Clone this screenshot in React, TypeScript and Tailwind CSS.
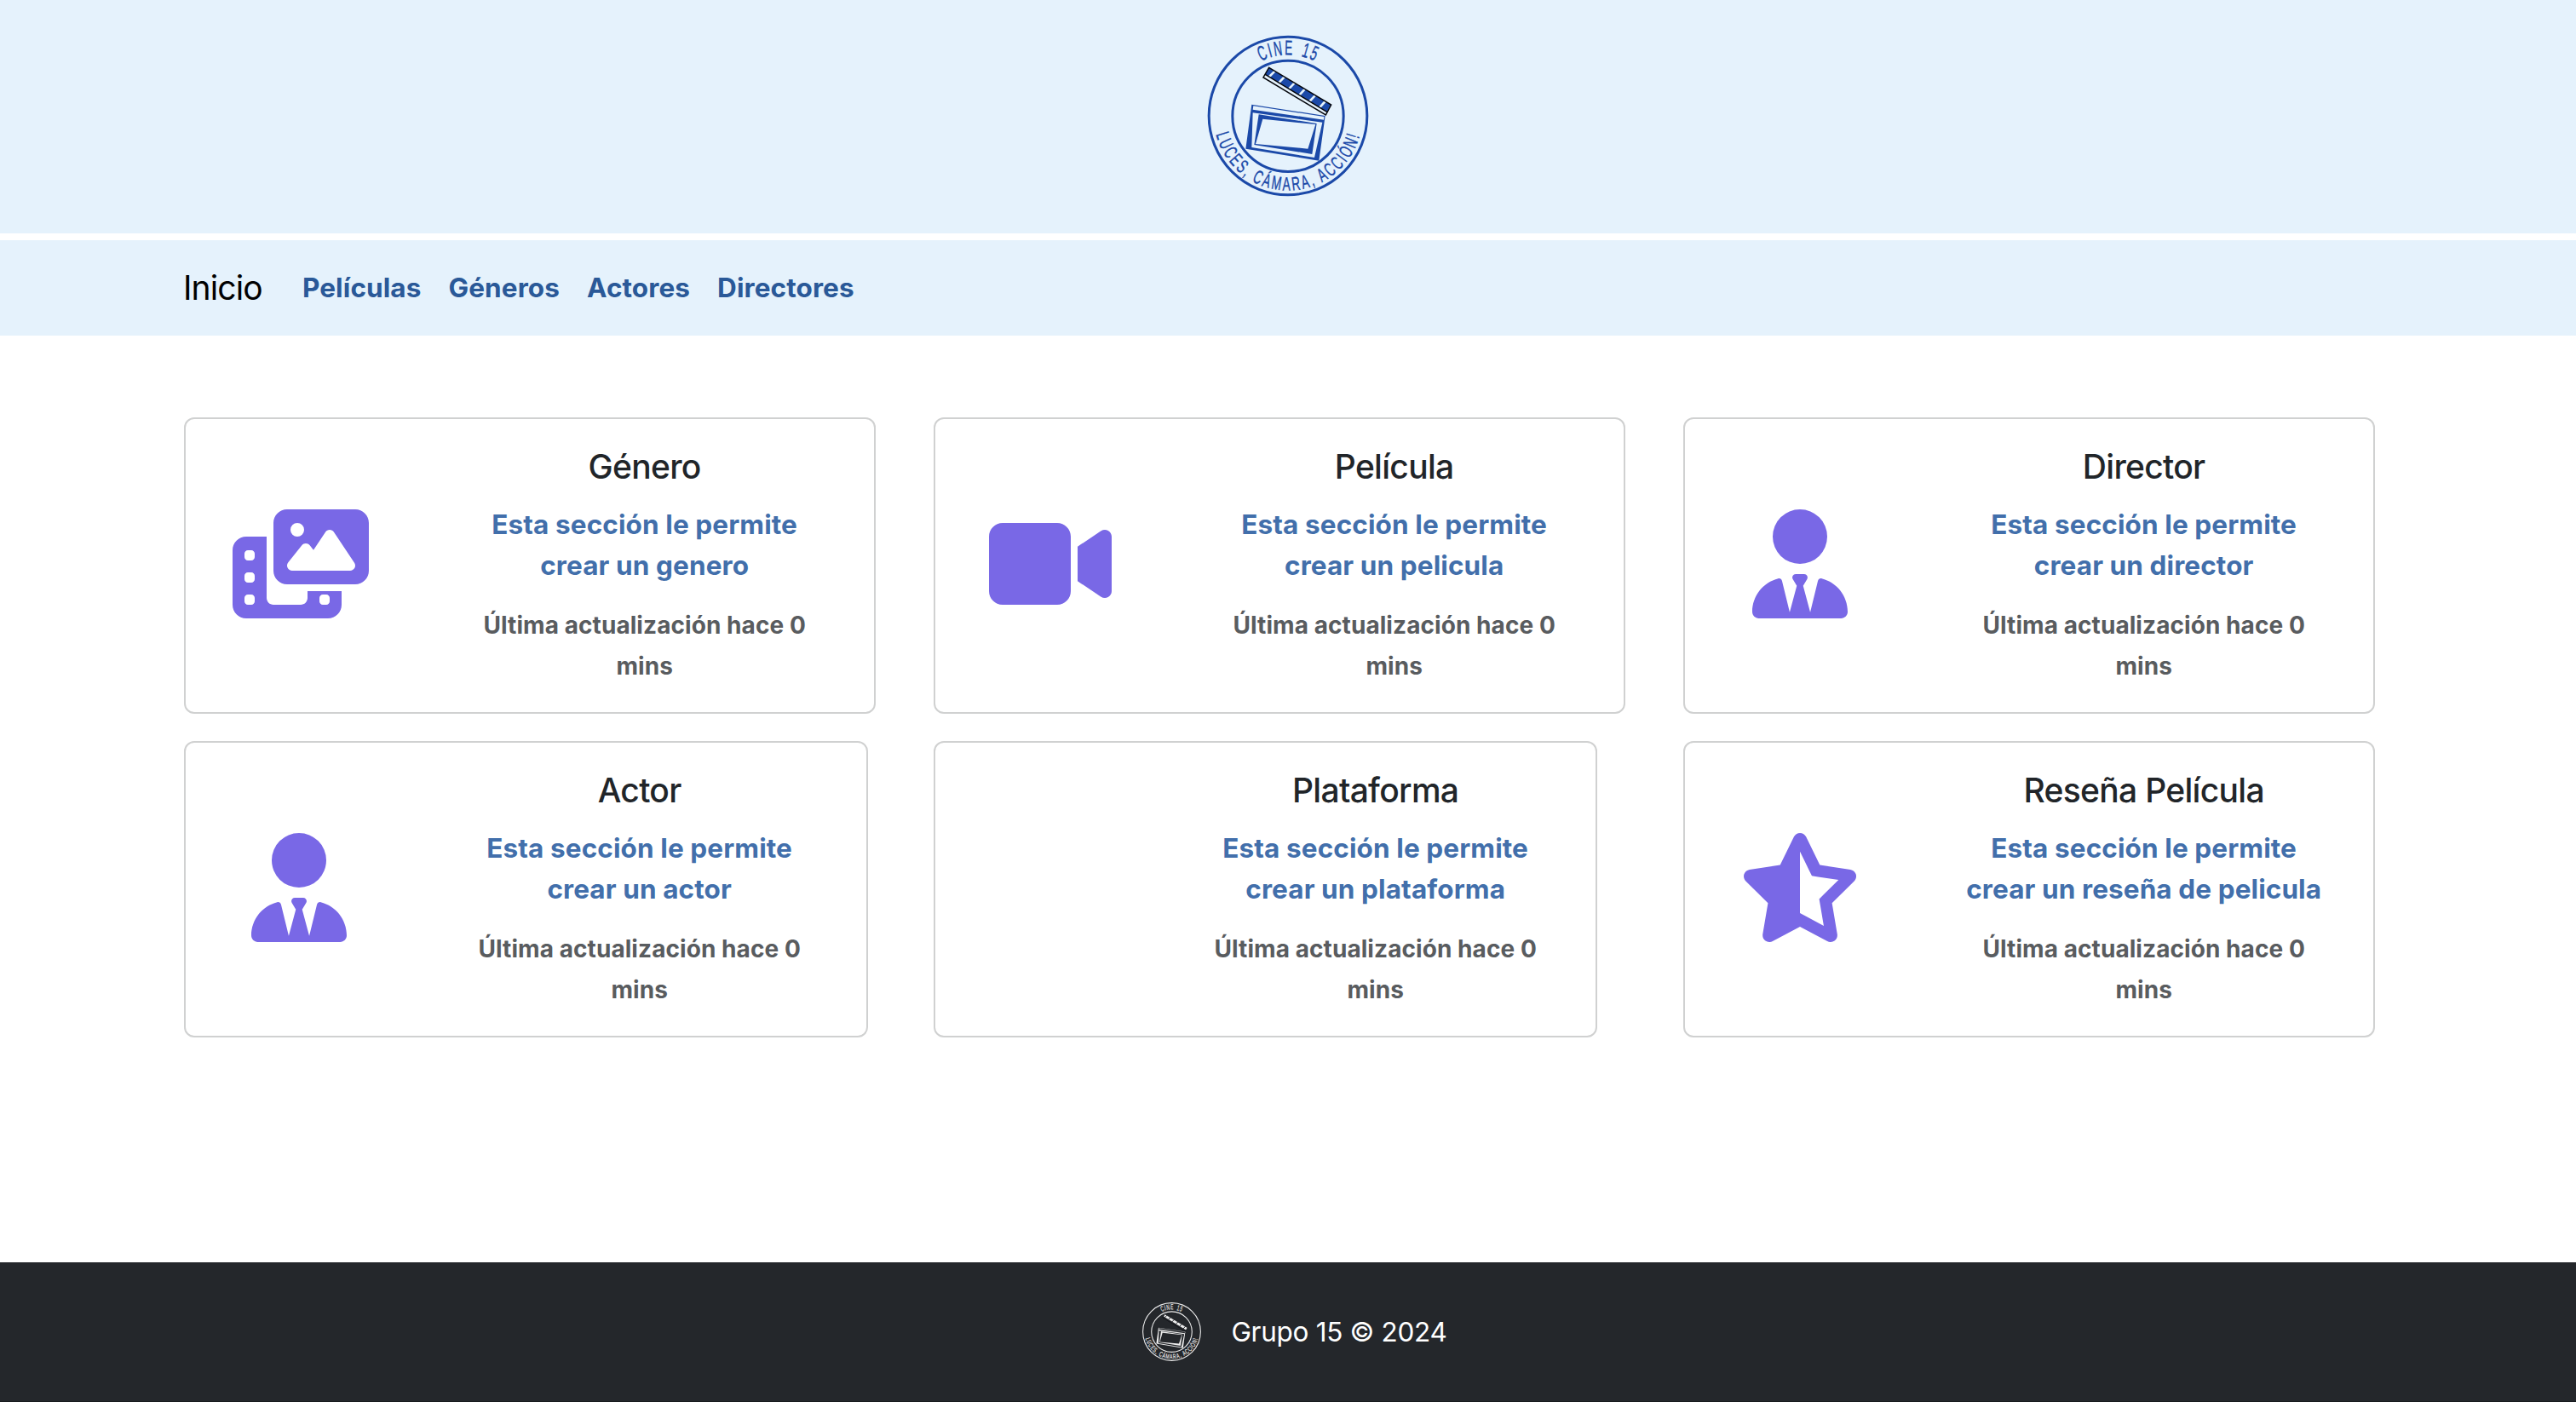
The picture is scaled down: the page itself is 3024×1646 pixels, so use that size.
import type { ComponentType } from "react";
import { FaPhotoFilm, FaStarHalfStroke, FaUserTie, FaVideo } from "react-icons/fa6";

type LogoProps = { id: string; color: string; background: string; className: string };

// Round badge with a clapperboard in the middle and lettering around the ring.
function Logo({ id, color, background, className }: LogoProps) {
  const stripes = [
    [290, 189, 270, 209],
    [324, 209, 303, 231],
    [359, 231, 339, 252],
    [396, 252, 376, 274],
    [433, 274, 412, 296],
    [467, 296, 447, 318],
  ];
  return (
    <svg viewBox="36 47 600 600" className={className} role="img" aria-label="Cine 15">
      <defs>
        <path id={`${id}-top`} d="M 240 155 A 215 215 0 0 1 436 157" />
        <path id={`${id}-bottom`} d="M 82 412 A 262 262 0 0 0 590 412" />
      </defs>
      <circle cx="336" cy="347" r="278.5" fill="none" stroke={color} strokeWidth="9" />
      <circle cx="336" cy="348" r="195.5" fill="none" stroke={color} strokeWidth="9" />
      <g fill={color} stroke={color} strokeWidth="1.2" fontFamily="'Liberation Sans', Arial, sans-serif">
        <text fontSize="72" letterSpacing="10" wordSpacing="14">
          <textPath href={`#${id}-top`} textLength="202" lengthAdjust="spacingAndGlyphs">CINE 15</textPath>
        </text>
        <text fontSize="67" letterSpacing="12">
          <textPath href={`#${id}-bottom`} textLength="694" lengthAdjust="spacingAndGlyphs">LUCES, CÁMARA, ACCIÓN!</textPath>
        </text>
      </g>
      <path d="M269 177 L488 308 L473 333 L256 201 Z" fill={color} />
      {stripes.map(([x1, y1, x2, y2]) => (
        <line key={x1} x1={x1} y1={y1} x2={x2} y2={y2} stroke={background} strokeWidth="8" />
      ))}
      <path d="M269 177 L488 308 L469 344 L249 212 Z M256 201 L473 333" fill="none" stroke="#05070c" strokeWidth="4.5" />
      <path
        fillRule="evenodd"
        fill={color}
        d="M208 307 L467 347 L445 505 L187 463 Z M214 312 L212 325 L462 361 L463 350 Z M212 336 L208 458 L429 494 L457 370 Z"
      />
      <path
        fillRule="evenodd"
        fill={color}
        d="M233 342 L437 374 L421 482 L217 449 Z M247 358 L222 446 L406 463 L433 377 Z"
      />
    </svg>
  );
}

type Section = {
  title: string;
  subject: string;
  Icon?: ComponentType<{ className?: string }>;
  iconWidth?: string;
  width: string;
};

const sections: Section[] = [
  { title: "Género", subject: "genero", Icon: FaPhotoFilm, iconWidth: "w-40", width: "w-[812px]" },
  { title: "Película", subject: "pelicula", Icon: FaVideo, iconWidth: "w-36", width: "w-[812px]" },
  { title: "Director", subject: "director", Icon: FaUserTie, iconWidth: "w-28", width: "w-[812px]" },
  { title: "Actor", subject: "actor", Icon: FaUserTie, iconWidth: "w-28", width: "w-[803px]" },
  { title: "Plataforma", subject: "plataforma", width: "w-[779px]" },
  { title: "Reseña Película", subject: "reseña de pelicula", Icon: FaStarHalfStroke, iconWidth: "w-36", width: "w-[812px]" },
];

function Card({ title, subject, Icon, iconWidth, width }: Section) {
  return (
    <article className={`${width} grid h-[348px] grid-cols-3 rounded-xl border-2 border-[#d0d1d1] bg-white`}>
      <div className="flex items-center justify-center pb-1">
        {Icon && <Icon className={`${iconWidth} h-32 text-[#7968e6]`} />}
      </div>
      <div className="col-span-2 pt-8 text-center font-bold">
        <h5 className="text-[39px] leading-[48px] font-medium tracking-[-0.7px] text-[#212529]">{title}</h5>
        <p className="mt-5 text-[31.5px] leading-[48px] tracking-[0.1px] text-[#426fab]">
          Esta sección le permite
          <br />
          crear un {subject}
        </p>
        <p className="mt-[22px] text-[28px] leading-[48px] tracking-[0.07px] text-[#595c5f]">
          Última actualización hace 0
          <br />
          mins
        </p>
      </div>
    </article>
  );
}

const links = ["Películas", "Géneros", "Actores", "Directores"];

export default function App() {
  return (
    <div className="flex h-[1646px] flex-col bg-white font-['Inter',sans-serif]">
      <header className="flex h-[274px] justify-center bg-[#e5f2fc] pt-9">
        <Logo id="header-logo" color="#1b49a8" background="#e5f2fc" className="size-[200px]" />
      </header>
      <nav className="mt-2 flex h-28 items-center bg-[#e5f2fc] pl-[215px]">
        <a className="w-[140px] text-[39px] tracking-[-0.9px] text-black">Inicio</a>
        <div className="flex gap-8 text-[31.5px] font-bold tracking-[0.1px] text-[#2a5998]">
          {links.map((link) => (
            <a key={link}>{link}</a>
          ))}
        </div>
      </nav>
      <main className="grid flex-1 grid-cols-[repeat(3,880px)] content-start gap-y-8 pt-24 pl-[216px]">
        {sections.map((section) => (
          <Card key={section.title} {...section} />
        ))}
      </main>
      <footer className="flex h-[164px] items-center justify-center gap-[33px] border-b border-[#181b1e] bg-[#24272b] pl-[14px] text-[31.5px] tracking-[-0.3px] text-white">
        <Logo id="footer-logo" color="#ececec" background="#24272b" className="size-[73px]" />
        <p>Grupo 15 © 2024</p>
      </footer>
    </div>
  );
}
